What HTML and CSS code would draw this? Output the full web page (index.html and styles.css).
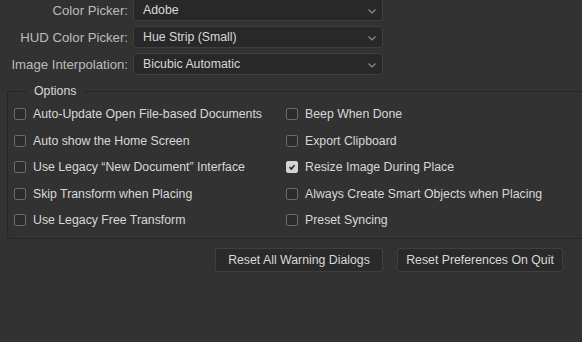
FILE: index.html
```html
<!DOCTYPE html>
<html lang="en">
<head>
  <meta charset="UTF-8" />
  <title>Preferences - General</title>
  <link rel="stylesheet" href="styles.css">
</head>
<body>
  <div class="prefs">
    <!-- pickers -->
    <div class="field-rows">
      <label class="field-label">Color Picker:</label>
      <div class="select"><span>Adobe</span><svg class="chev" viewBox="0 0 8 5"><path d="M0.5 0.5 L4 4 L7.5 0.5" /></svg></div>

      <label class="field-label">HUD Color Picker:</label>
      <div class="select"><span>Hue Strip (Small)</span><svg class="chev" viewBox="0 0 8 5"><path d="M0.5 0.5 L4 4 L7.5 0.5" /></svg></div>

      <label class="field-label">Image Interpolation:</label>
      <div class="select"><span>Bicubic Automatic</span><svg class="chev" viewBox="0 0 8 5"><path d="M0.5 0.5 L4 4 L7.5 0.5" /></svg></div>
    </div>

    <!-- options -->
    <fieldset class="options">
      <legend>Options</legend>
      <div class="option-grid">
        <label class="check"><span class="box"></span>Auto-Update Open File-based Documents</label>
        <label class="check"><span class="box"></span>Beep When Done</label>
        <label class="check"><span class="box"></span>Auto show the Home Screen</label>
        <label class="check"><span class="box"></span>Export Clipboard</label>
        <label class="check"><span class="box"></span>Use Legacy “New Document” Interface</label>
        <label class="check"><span class="box checked"><svg viewBox="0 0 12 12"><path d="M3 6.2 L5.2 8.3 L9 3.8" /></svg></span>Resize Image During Place</label>
        <label class="check"><span class="box"></span>Skip Transform when Placing</label>
        <label class="check"><span class="box"></span>Always Create Smart Objects when Placing</label>
        <label class="check"><span class="box"></span>Use Legacy Free Transform</label>
        <label class="check"><span class="box"></span>Preset Syncing</label>
      </div>
    </fieldset>

    <div class="actions">
      <button class="btn btn-warnings">Reset All Warning Dialogs</button>
      <button class="btn btn-quit">Reset Preferences On Quit</button>
    </div>
  </div>
</body>
</html>
```

FILE: styles.css
```css
:root {
  --bg: #323232;
  --field-bg: #282828;
  --field-border: #3e3e3e;
  --text: #d8d8d8;
  --label: #bcbcbc;
  --group-line: #262626;
}

* {
  box-sizing: border-box;
  margin: 0;
  padding: 0;
}

body {
  background: var(--bg);
  font-family: "Liberation Sans", Arial, sans-serif;
  font-size: 12.3px;
  color: var(--text);
  overflow: hidden;
}

.field-rows {
  display: grid;
  grid-template-columns: 128px 250px;
  column-gap: 5px;
  row-gap: 5px;
  align-items: center;
  margin-top: -1px;
}

.field-label {
  text-align: right;
  color: var(--label);
  font-size: 13.2px;
}

.select {
  height: 22px;
  background: var(--field-bg);
  border: 1px solid var(--field-border);
  border-radius: 2px;
  display: flex;
  align-items: center;
  justify-content: space-between;
  padding: 0 6px 0 9px;
  color: var(--text);
}

.chev {
  width: 8px;
  height: 5px;
  margin-top: 3px;
}

.chev path {
  fill: none;
  stroke: #8f8f8f;
  stroke-width: 1.2;
}

.options {
  margin: 9px -20px 0 7px;
  border: 1px solid var(--group-line);
  border-right: none;
  border-radius: 2px;
  padding: 3px 0 4px 6px;
}

.options legend {
  margin-left: 13px;
  padding: 0 7px;
  color: var(--text);
}

.option-grid {
  display: grid;
  grid-template-columns: 272px 1fr;
  grid-auto-rows: 26.5px;
  align-items: center;
}

.check {
  display: flex;
  align-items: center;
  gap: 7px;
  color: var(--text);
  white-space: nowrap;
}

.box {
  width: 12px;
  height: 12px;
  border: 1px solid #6a6a6a;
  border-radius: 2px;
  background: #2c2c2c;
  flex: none;
}

.box.checked {
  background: #d4d4d4;
  border-color: #d4d4d4;
}

.box svg {
  display: block;
  width: 10px;
  height: 10px;
}

.box svg path {
  fill: none;
  stroke: #2a2a2a;
  stroke-width: 2;
}

.actions {
  display: flex;
  gap: 14px;
  padding-left: 215px;
  margin-top: 9px;
}

.btn {
  height: 24px;
  background: #2a2a2a;
  border: 1px solid #3f3f3f;
  border-radius: 2px;
  color: var(--text);
  font-family: inherit;
  font-size: 12.3px;
  padding: 0;
}

.btn-warnings {
  width: 168px;
}

.btn-quit {
  width: 166px;
}
```
